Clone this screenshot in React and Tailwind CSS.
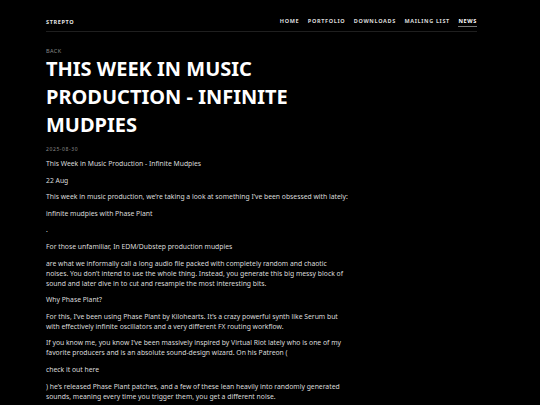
export default function App() {
  const paras = [
    "This Week in Music Production - Infinite Mudpies",
    "22 Aug",
    "This week in music production, we’re taking a look at something I’ve been obsessed with lately:",
    "infinite mudpies with Phase Plant",
    ".",
    "For those unfamiliar, In EDM/Dubstep production mudpies",
    "are what we informally call a long audio file packed with completely random and chaotic noises. You don’t intend to use the whole thing. Instead, you generate this big messy block of sound and later dive in to cut and resample the most interesting bits.",
    "Why Phase Plant?",
    "For this, I’ve been using Phase Plant by Kilohearts. It’s a crazy powerful synth like Serum but with effectively infinite oscillators and a very different FX routing workflow.",
    "If you know me, you know I’ve been massively inspired by Virtual Riot lately who is one of my favorite producers and is an absolute sound-design wizard. On his Patreon (",
    "check it out here",
    ") he’s released Phase Plant patches, and a few of these lean heavily into randomly generated sounds, meaning every time you trigger them, you get a different noise.",
  ];
  const nav = ["HOME", "PORTFOLIO", "DOWNLOADS", "MAILING LIST"];
  return (
    <div className="min-h-[405px] w-[540px] overflow-hidden bg-black" style={{ fontFamily: '"Noto Sans", "Open Sans", sans-serif' }}>
      <div className="ml-[46px] w-[431px]">
        <header className="flex items-center justify-between border-b border-[#1f1f1f] pt-[17px] pb-[4px]">
          <span className="text-[5.5px] font-bold leading-[8px] tracking-[0.12em] text-[#e5e5e5]">STREPTO</span>
          <nav className="flex gap-[8.5px] text-[5.5px] font-bold leading-[8px] tracking-[0.12em] text-[#d8d8d8]">
            {nav.map((n) => (
              <span key={n} className="border-b border-transparent pb-[1px]">{n}</span>
            ))}
            <span className="border-b border-[#777] pb-[1px] text-white">NEWS</span>
          </nav>
        </header>
        <div className="pt-[15px] text-[5.5px] leading-[8px] tracking-[0.08em] text-[#8a8a8a]">BACK</div>
        <h1 className="mt-[0px] max-w-[302px] text-[20px] font-bold leading-[28px] text-white">
          THIS WEEK IN MUSIC PRODUCTION - INFINITE MUDPIES
        </h1>
        <div className="mt-[6px] text-[5px] leading-[8px] tracking-[0.12em] text-[#8a8a8a]">2025-08-30</div>
        <div className="mt-[6px] max-w-[302px] text-[6.8px] leading-[10px] text-[#dcdcdc]">
          {paras.map((p, i) => (
            <p key={i} className="mb-[6.6px]">{p}</p>
          ))}
        </div>
      </div>
    </div>
  );
}
